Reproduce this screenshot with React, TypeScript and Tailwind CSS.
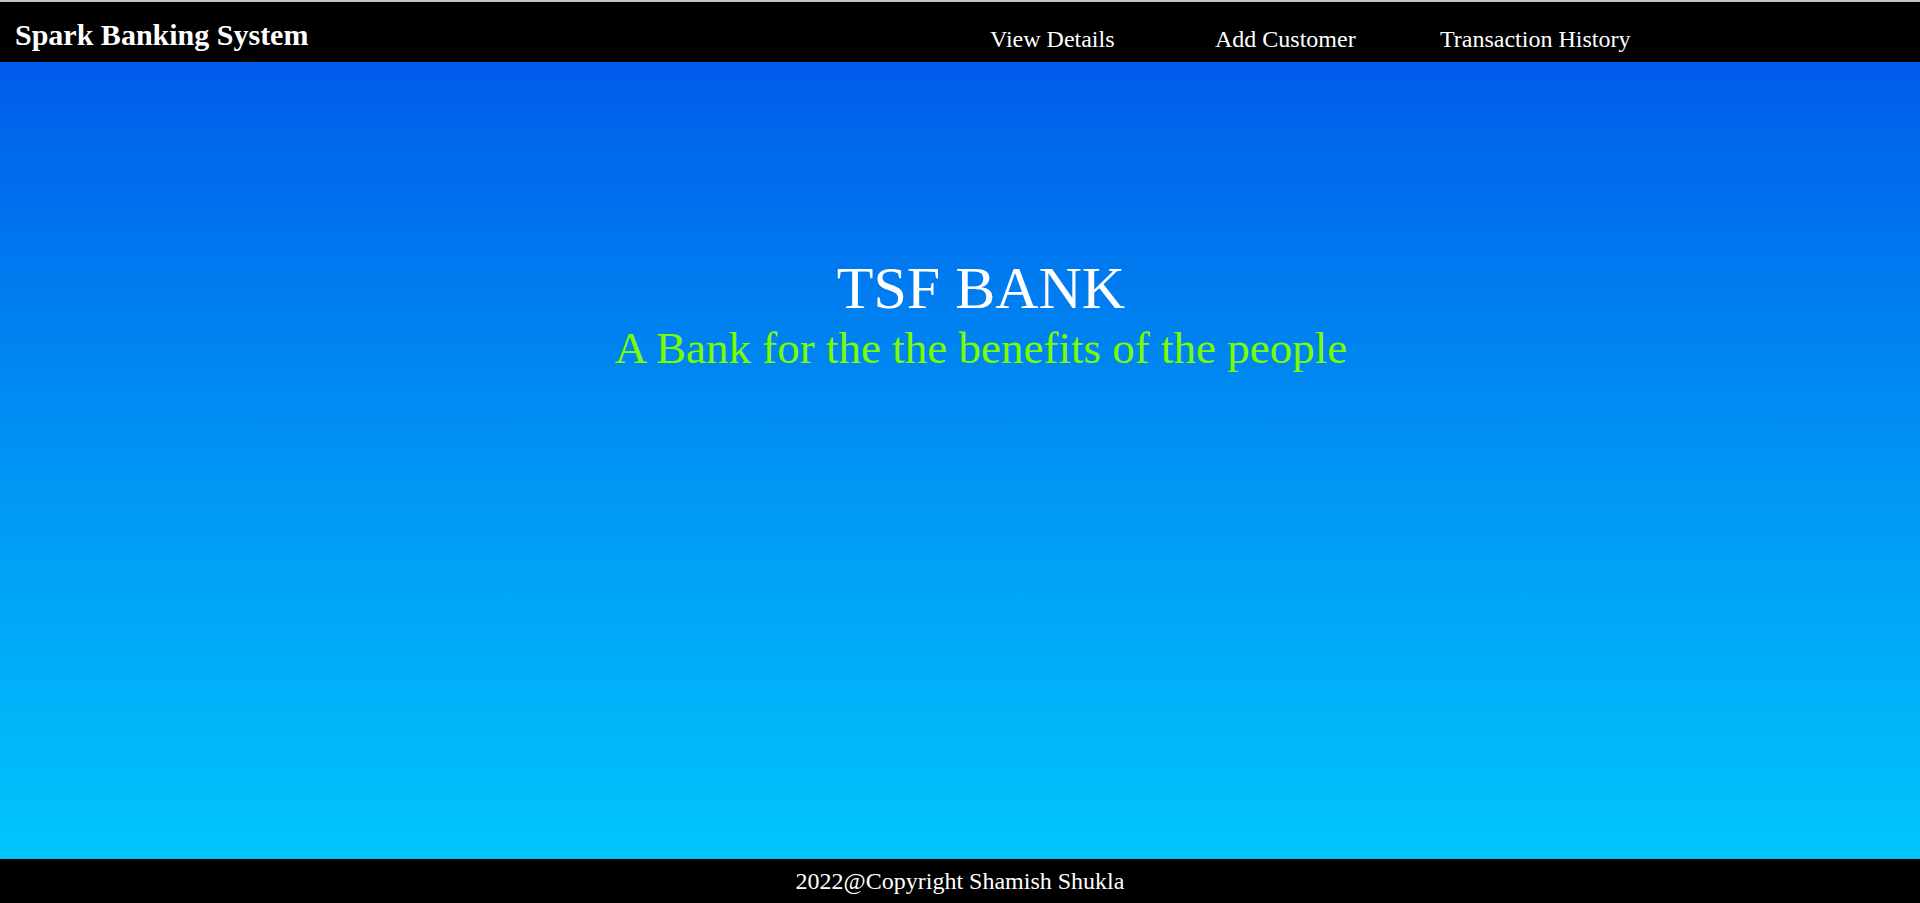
import React from "react";

const serif = { fontFamily: '"Liberation Serif", "Times New Roman", serif' };

export default function App() {
  return (
    <div className="flex h-[903px] w-full flex-col" style={serif}>
      <header className="flex h-[62px] shrink-0 items-start border-t-2 border-[#c3c3c3] bg-black text-white">
        <div className="pl-[15px] pt-[18px] text-[30px] font-bold leading-[30px]">Spark Banking System</div>
        <nav className="ml-auto mr-[255px] flex pt-[25px] text-[24px] leading-[24px]">
          <a className="w-[225px]" href="#">View Details</a>
          <a className="w-[225px]" href="#">Add Customer</a>
          <a className="w-[225px]" href="#">Transaction History</a>
        </nav>
      </header>
      <main className="flex flex-1 flex-col items-center bg-gradient-to-b from-[#005bea] to-[#00c6fb] pl-[42px] pt-[196px]">
        <h1 className="text-[60px] leading-[60px] text-white">TSF BANK</h1>
        <p className="mt-[8px] text-[45px] leading-[45px] text-[#7cfc00]">A Bank for the the benefits of the people</p>
      </main>
      <footer className="h-[44px] shrink-0 bg-black pt-[10px] text-center text-[24px] leading-[24px] text-white">
        2022@Copyright Shamish Shukla
      </footer>
    </div>
  );
}
